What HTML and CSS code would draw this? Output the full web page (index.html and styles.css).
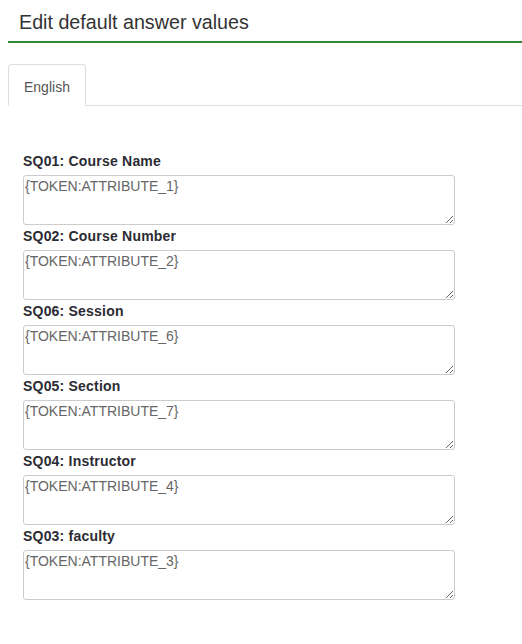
FILE: index.html
```html
<!DOCTYPE html>
<html>
<head>
<meta charset="utf-8">
<link rel="stylesheet" href="styles.css">
</head>
<body>
<div class="page">
  <div class="header">Edit default answer values</div>
  <ul class="tabs">
    <li class="tab active">English</li>
  </ul>
  <form class="form">
    <div class="field">
      <label class="label">SQ01: Course Name</label>
      <textarea class="input">{TOKEN:ATTRIBUTE_1}</textarea>
    </div>
    <div class="field">
      <label class="label">SQ02: Course Number</label>
      <textarea class="input">{TOKEN:ATTRIBUTE_2}</textarea>
    </div>
    <div class="field">
      <label class="label">SQ06: Session</label>
      <textarea class="input">{TOKEN:ATTRIBUTE_6}</textarea>
    </div>
    <div class="field">
      <label class="label">SQ05: Section</label>
      <textarea class="input">{TOKEN:ATTRIBUTE_7}</textarea>
    </div>
    <div class="field">
      <label class="label">SQ04: Instructor</label>
      <textarea class="input">{TOKEN:ATTRIBUTE_4}</textarea>
    </div>
    <div class="field">
      <label class="label">SQ03: faculty</label>
      <textarea class="input">{TOKEN:ATTRIBUTE_3}</textarea>
    </div>
  </form>
</div>
</body>
</html>
```

FILE: styles.css
```css
html, body {
  margin: 0;
  padding: 0;
  background: #fff;
}
body {
  font-family: "Liberation Sans", Arial, sans-serif;
  color: #333;
  padding: 0 0 0 8px;
}
.header {
  font-size: 19.7px;
  color: #333;
  padding: 11px 0 0 11px;
  height: 30px;
  border-bottom: 2px solid #328637;
}
.tabs {
  list-style: none;
  margin: 21px 0 0 0;
  padding: 0;
  display: flex;
  border-bottom: 1px solid #ddd;
}
.tab {
  font-size: 14px;
  color: #555;
  padding: 0 15px;
  height: 40px;
  line-height: 44px;
  border: 1px solid #ddd;
  border-bottom-color: transparent;
  border-radius: 4px 4px 0 0;
  margin-bottom: -1px;
  background: #fff;
}
.form {
  margin: 0;
  padding: 47px 0 0 15px;
  display: flex;
  flex-direction: column;
}
.field {
  display: flex;
  flex-direction: column;
}
.label {
  font-size: 14px;
  font-weight: bold;
  letter-spacing: 0.2px;
  color: #2b2b33;
  height: 22px;
  line-height: 16px;
}
.input {
  box-sizing: border-box;
  width: 432px;
  height: 50px;
  margin: 0 0 3px 0;
  padding: 2px 1px;
  border: 1px solid #ccc;
  border-radius: 3px;
  font-family: "Liberation Sans", Arial, sans-serif;
  font-size: 14px;
  color: #666;
  resize: vertical;
}
```
